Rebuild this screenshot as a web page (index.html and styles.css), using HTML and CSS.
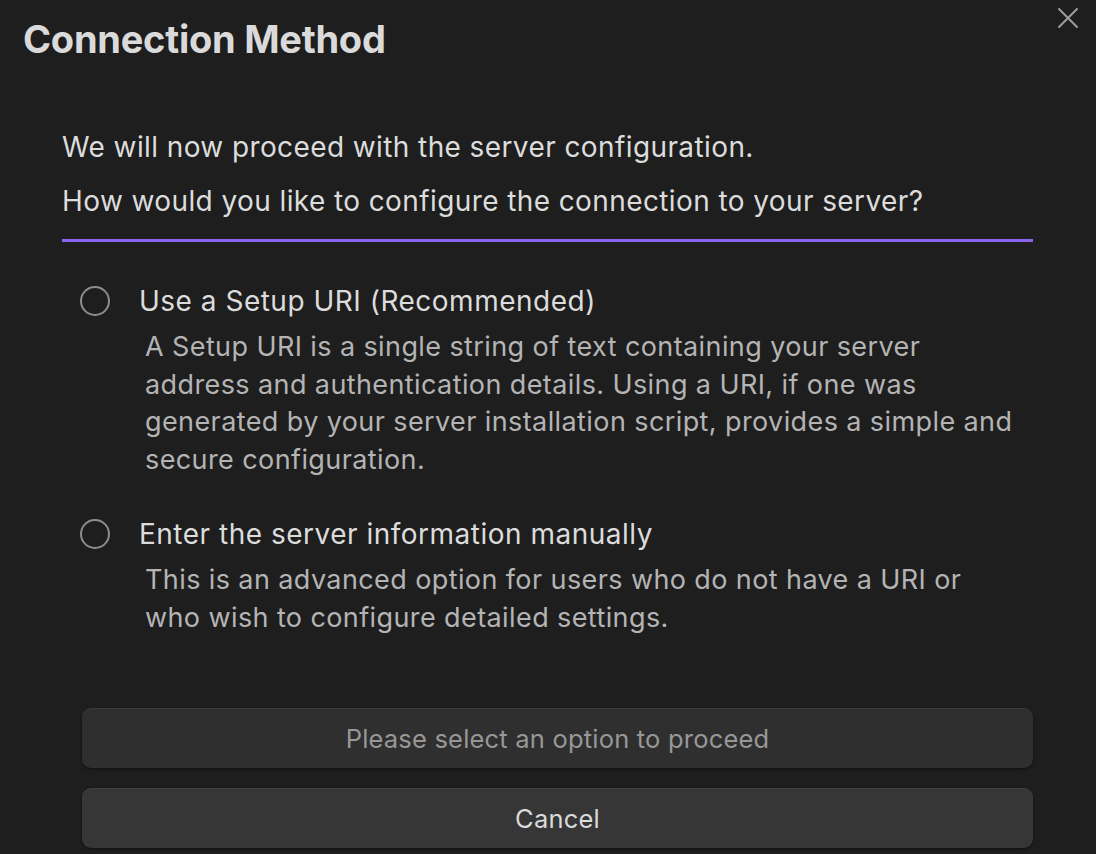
FILE: index.html
```html
<!DOCTYPE html>
<html lang="en">
<head>
<meta charset="utf-8">
<title>Connection Method</title>
<link rel="stylesheet" href="styles.css">
</head>
<body>
<div class="modal">
  <button class="close" aria-label="Close">
    <svg width="22" height="22" viewBox="0 0 22 22"><path d="M2 2 L20 20 M20 2 L2 20" stroke="#9c9c9c" stroke-width="2" stroke-linecap="round" fill="none"/></svg>
  </button>
  <h1 class="title">Connection Method</h1>
  <div class="content">
    <p class="lead">We will now proceed with the server configuration.</p>
    <p class="lead">How would you like to configure the connection to your server?</p>
    <div class="divider"></div>
    <div class="options">
      <label class="option">
        <div class="option-head">
          <span class="radio"></span>
          <span class="option-name">Use a Setup URI (Recommended)</span>
        </div>
        <div class="option-desc">A Setup URI is a single string of text containing your server address and authentication details. Using a URI, if one was generated by your server installation script, provides a simple and secure configuration.</div>
      </label>
      <label class="option">
        <div class="option-head">
          <span class="radio"></span>
          <span class="option-name">Enter the server information manually</span>
        </div>
        <div class="option-desc">This is an advanced option for users who do not have a URI or who wish to configure detailed settings.</div>
      </label>
    </div>
    <div class="buttons">
      <button class="btn btn-disabled">Please select an option to proceed</button>
      <button class="btn">Cancel</button>
    </div>
  </div>
</div>
</body>
</html>
```

FILE: styles.css
```css
html, body {
  margin: 0;
  padding: 0;
  background: #1e1e1e;
  height: 100%;
}
body {
  font-family: Inter, "Noto Sans", "Liberation Sans", sans-serif;
  color: #dcdcdc;
  overflow: hidden;
}
.modal {
  position: relative;
  padding: 15px 0 0 23px;
}
.close {
  position: absolute;
  top: 7px;
  left: 1057px;
  width: 22px;
  height: 22px;
  padding: 0;
  border: 0;
  background: transparent;
  display: flex;
}
.title {
  margin: 0;
  font-size: 38px;
  line-height: 48px;
  font-weight: 700;
  color: #dadada;
  letter-spacing: -0.25px;
}
.content {
  margin: 57px 0 0 39px;
  width: 971px;
}
.lead {
  margin: 0;
  font-size: 28px;
  line-height: 54px;
  letter-spacing: 0.4px;
  color: #dcdcdc;
}
.divider {
  margin-top: 11px;
  height: 3px;
  background: #8a64ee;
}
.options {
  padding-left: 18px;
  margin-top: 39px;
  display: flex;
  flex-direction: column;
  gap: 36px;
}
.option {
  display: block;
}
.option-head {
  display: flex;
  align-items: center;
  gap: 29px;
}
.radio {
  width: 26px;
  height: 26px;
  border: 2px solid #8d8d8d;
  border-radius: 50%;
  flex: none;
}
.option-name {
  font-size: 28px;
  line-height: 40px;
  letter-spacing: 0.5px;
  color: #dcdcdc;
}
.option-desc {
  margin-top: 7px;
  padding-left: 65px;
  padding-right: 16px;
  font-size: 27px;
  line-height: 37.5px;
  letter-spacing: 0.4px;
  color: #b4b4b4;
}
.buttons {
  margin: 72px 0 0 20px;
  display: flex;
  flex-direction: column;
  gap: 20px;
}
.btn {
  height: 60px;
  border: 0;
  border-radius: 9px;
  background: #363636;
  color: #dadada;
  font-family: Inter, "Noto Sans", "Liberation Sans", sans-serif;
  font-size: 25.5px;
  letter-spacing: 0.2px;
  box-shadow: 0 1px 3px rgba(0,0,0,0.5), inset 0 1px 0 rgba(255,255,255,0.06);
}
.btn-disabled {
  background: #2f2f2f;
  color: #979797;
}
```
